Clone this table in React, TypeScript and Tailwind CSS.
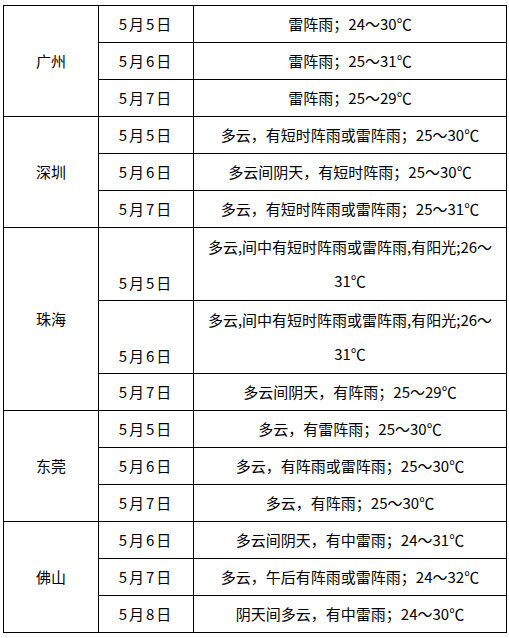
import { Fragment } from 'react';

type Day = { date: string; weather: string[] };
type City = { name: string; days: Day[] };

const cities: City[] = [
  {
    name: '广州',
    days: [
      { date: '5月5日', weather: ['雷阵雨；24～30℃'] },
      { date: '5月6日', weather: ['雷阵雨；25～31℃'] },
      { date: '5月7日', weather: ['雷阵雨；25～29℃'] },
    ],
  },
  {
    name: '深圳',
    days: [
      { date: '5月5日', weather: ['多云，有短时阵雨或雷阵雨；25～30℃'] },
      { date: '5月6日', weather: ['多云间阴天，有短时阵雨；25～30℃'] },
      { date: '5月7日', weather: ['多云，有短时阵雨或雷阵雨；25～31℃'] },
    ],
  },
  {
    name: '珠海',
    days: [
      { date: '5月5日', weather: ['多云,间中有短时阵雨或雷阵雨,有阳光;26～', '31℃'] },
      { date: '5月6日', weather: ['多云,间中有短时阵雨或雷阵雨,有阳光;26～', '31℃'] },
      { date: '5月7日', weather: ['多云间阴天，有阵雨；25～29℃'] },
    ],
  },
  {
    name: '东莞',
    days: [
      { date: '5月5日', weather: ['多云，有雷阵雨；25～30℃'] },
      { date: '5月6日', weather: ['多云，有阵雨或雷阵雨；25～30℃'] },
      { date: '5月7日', weather: ['多云，有阵雨；25～30℃'] },
    ],
  },
  {
    name: '佛山',
    days: [
      { date: '5月6日', weather: ['多云间阴天，有中雷雨；24～31℃'] },
      { date: '5月7日', weather: ['多云，午后有阵雨或雷阵雨；24～32℃'] },
      { date: '5月8日', weather: ['阴天间多云，有中雷雨；24～30℃'] },
    ],
  },
];

export default function App() {
  return (
    <div className="min-h-[638px] bg-white pl-[3px] pt-[5px] font-['Noto_Sans_CJK_SC',sans-serif] text-[15px] text-black">
      {/* 15 rows: two-line weather rows for 珠海 are taller */}
      <div className="grid w-[504px] grid-cols-[95px_95px_313px] grid-rows-[repeat(6,37px)_73px_73px_repeat(7,37px)] border-l border-t border-black">
        {cities.map((city) => (
          <Fragment key={city.name}>
            <div className="row-span-3 flex items-center justify-center border-b border-r border-black">
              {city.name}
            </div>
            {city.days.map((day) => {
              const tall = day.weather.length > 1;
              return (
                <Fragment key={day.date}>
                  <div
                    className={`flex justify-center border-b border-r border-black leading-[34px] tracking-[2px] ${
                      tall ? 'items-end' : 'items-center'
                    }`}
                  >
                    {day.date}
                  </div>
                  <div className="flex flex-col items-center justify-center whitespace-nowrap border-b border-r border-black leading-[34px]">
                    {day.weather.map((line, i) => (
                      <span key={i}>{line}</span>
                    ))}
                  </div>
                </Fragment>
              );
            })}
          </Fragment>
        ))}
      </div>
    </div>
  );
}
